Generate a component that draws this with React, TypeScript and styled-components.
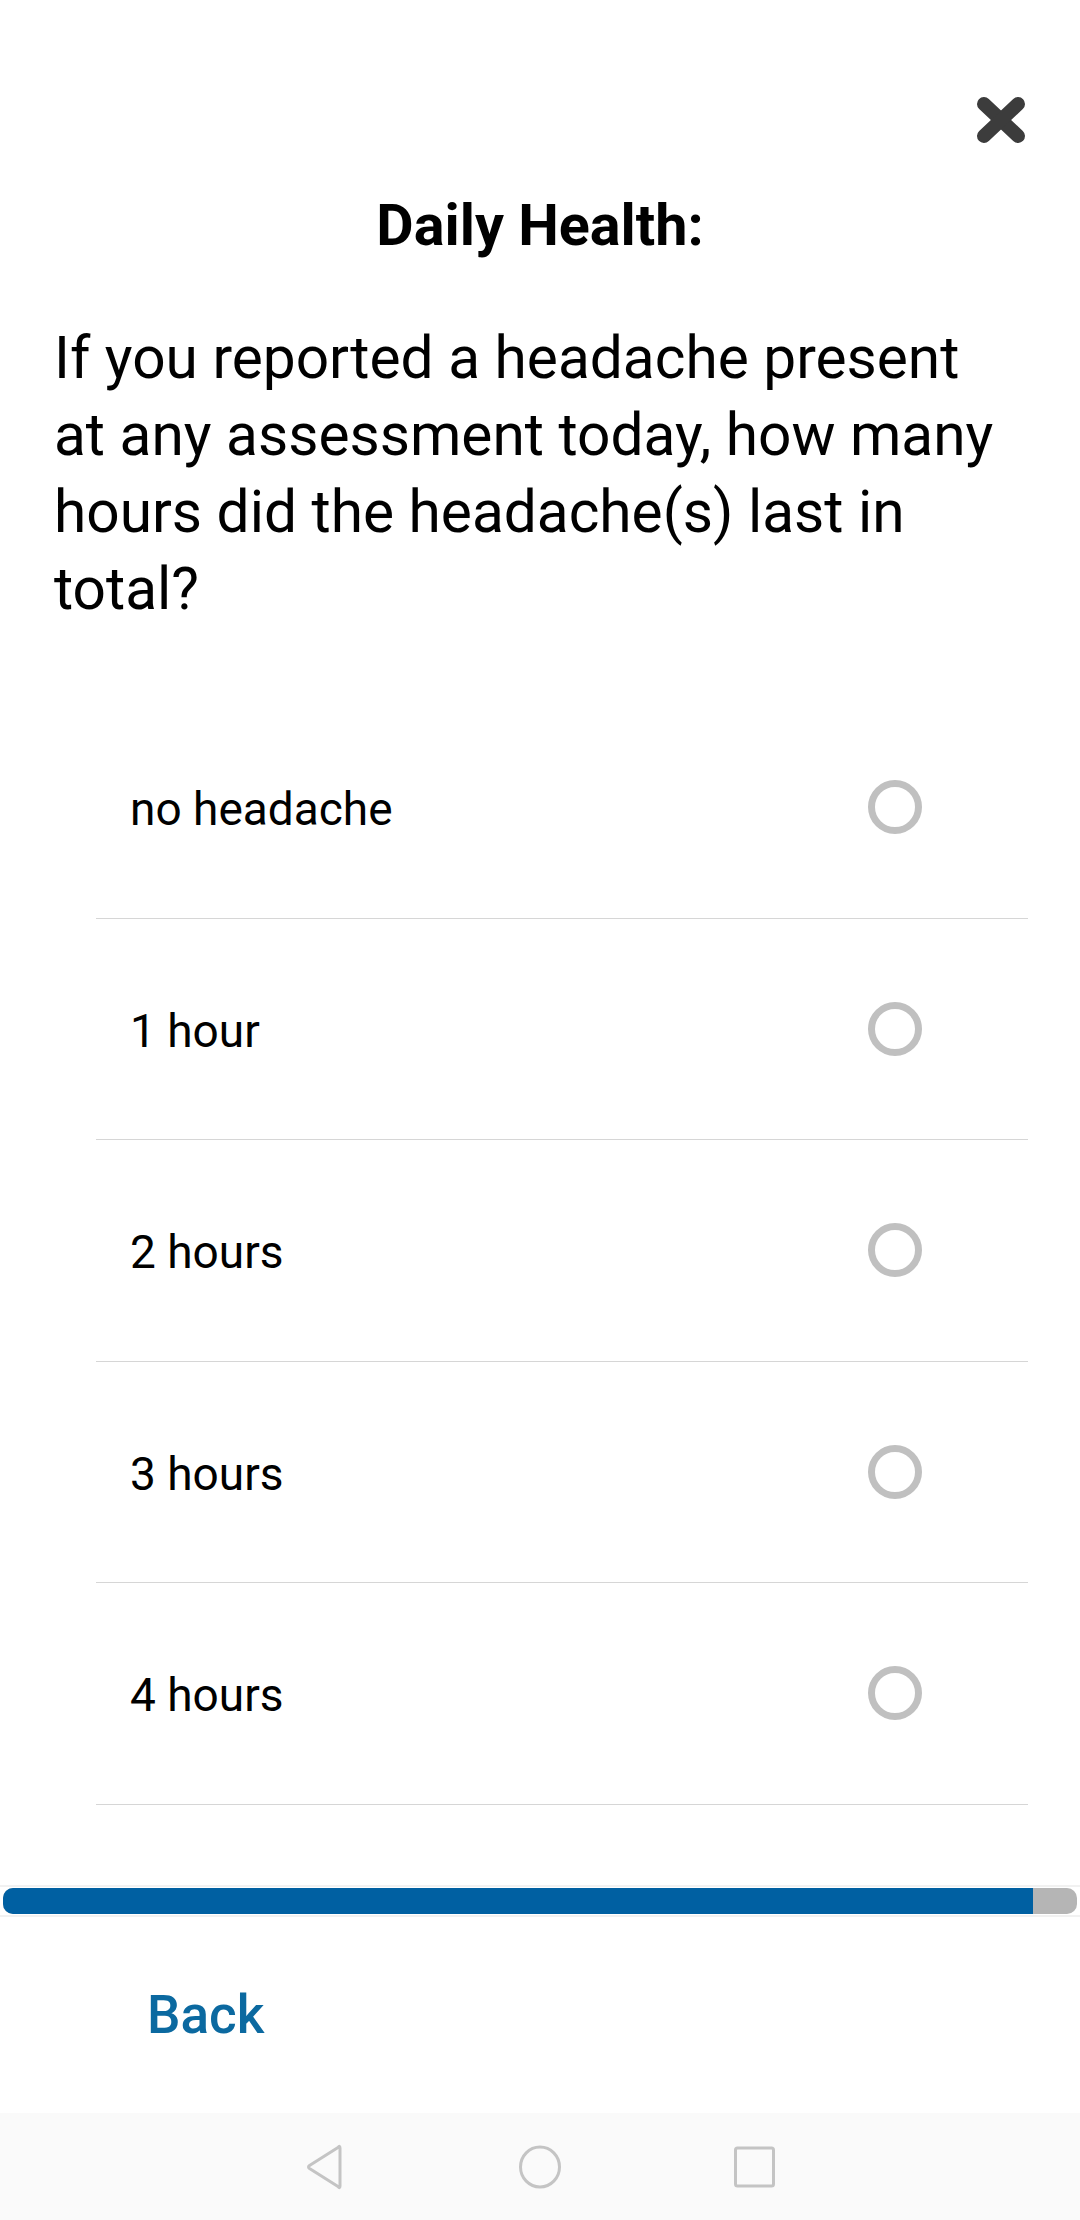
import React from "react";
import styled, { createGlobalStyle } from "styled-components";

const GlobalStyle = createGlobalStyle`
  html, body {
    margin: 0;
    padding: 0;
    background: #ffffff;
  }
  body {
    font-family: Roboto, "Noto Sans", "Liberation Sans", sans-serif;
    color: #000;
  }
  * { box-sizing: border-box; }
`;

const Screen = styled.div`
  width: 1080px;
  height: 2220px;
  display: flex;
  flex-direction: column;
  background: #ffffff;
  overflow: hidden;
`;

const TopBar = styled.div`
  display: flex;
  justify-content: flex-end;
  padding: 96px 54px 0 0;
  height: 192px;
`;

const CloseButton = styled.button`
  width: 50px;
  height: 48px;
  padding: 0;
  border: none;
  background: transparent;
  display: flex;
  align-items: center;
  justify-content: center;
  cursor: pointer;
`;

const Title = styled.h1`
  margin: 0;
  font-family: Roboto, sans-serif;
  font-weight: 700;
  font-size: 57.5px;
  line-height: 67px;
  text-align: center;
  color: #000;
`;

const Question = styled.p`
  margin: 61px 0 0 54px;
  width: 960px;
  font-family: Roboto, sans-serif;
  font-weight: 400;
  font-size: 58.6px;
  line-height: 77px;
  color: #000;
`;

const OptionList = styled.ul`
  list-style: none;
  margin: 69px 52px 0 96px;
  padding: 0;
`;

const OptionRow = styled.li`
  height: 221.5px;
  display: flex;
  align-items: center;
  justify-content: space-between;
  padding: 0 106px 0 34px;
  border-bottom: 1.5px solid #d6d6d6;
  cursor: pointer;
`;

const OptionLabel = styled.span`
  font-family: Roboto, sans-serif;
  font-size: 46px;
  color: #000;
  padding-top: 4px;
`;

const Radio = styled.span`
  width: 54px;
  height: 54px;
  border-radius: 50%;
  border: 7px solid #c0c0c0;
  display: block;
`;

const Spacer = styled.div`
  flex: 1;
`;

const ProgressBand = styled.div`
  border-top: 2px solid #f1f1f1;
  border-bottom: 2px solid #f1f1f1;
  padding: 1px 3px;
`;

const ProgressTrack = styled.div`
  height: 26px;
  border-radius: 10px;
  background: #b5b5b5;
  overflow: hidden;
  display: flex;
`;

const ProgressFill = styled.div`
  height: 100%;
  background: #0060a2;
`;

const Footer = styled.div`
  height: 196px;
  display: flex;
  align-items: center;
  padding: 0 0 0 147px;
`;

const BackButton = styled.button`
  border: none;
  background: transparent;
  padding: 0;
  font-family: Roboto, sans-serif;
  font-weight: 500;
  font-size: 53px;
  color: #0b69a0;
  cursor: pointer;
`;

const NavBar = styled.div`
  height: 107px;
  background: #fafafa;
  display: flex;
  align-items: center;
  justify-content: center;
  gap: 171px;
`;

const NavIcon = styled.svg`
  width: 44px;
  height: 46px;
  display: block;
`;

const options = ["no headache", "1 hour", "2 hours", "3 hours", "4 hours"];

export default function App() {
  return (
    <>
      <GlobalStyle />
      <Screen>
        <TopBar>
          <CloseButton aria-label="Close">
            <svg width="50" height="48" viewBox="0 0 50 48">
              <g stroke="#3c3c3c" strokeWidth="14" strokeLinecap="round">
                <line x1="8" y1="8" x2="42" y2="40" />
                <line x1="42" y1="8" x2="8" y2="40" />
              </g>
            </svg>
          </CloseButton>
        </TopBar>
        <Title>Daily Health:</Title>
        <Question>
          If you reported a headache present at any assessment today, how many
          hours did the headache(s) last in total?
        </Question>
        <OptionList>
          {options.map((o) => (
            <OptionRow key={o}>
              <OptionLabel>{o}</OptionLabel>
              <Radio />
            </OptionRow>
          ))}
        </OptionList>
        <Spacer />
        <ProgressBand>
          <ProgressTrack>
            <ProgressFill style={{ width: "95.9%" }} />
          </ProgressTrack>
        </ProgressBand>
        <Footer>
          <BackButton>Back</BackButton>
        </Footer>
        <NavBar>
          <NavIcon viewBox="0 0 44 46">
            <path
              d="M37 4 L37 42 Q37 45 35 42.6 L6.5 24.5 Q4.5 23 6.5 21.5 L35 3.4 Q37 1 37 4 Z"
              fill="none"
              stroke="#c4c4c4"
              strokeWidth="3"
              strokeLinejoin="round"
            />
          </NavIcon>
          <NavIcon viewBox="0 0 44 46">
            <ellipse cx="22" cy="23" rx="19.5" ry="20" fill="none" stroke="#c4c4c4" strokeWidth="3" />
          </NavIcon>
          <NavIcon viewBox="0 0 44 46">
            <rect x="2.5" y="4" width="38" height="38" rx="2" fill="none" stroke="#c4c4c4" strokeWidth="3" />
          </NavIcon>
        </NavBar>
      </Screen>
    </>
  );
}
